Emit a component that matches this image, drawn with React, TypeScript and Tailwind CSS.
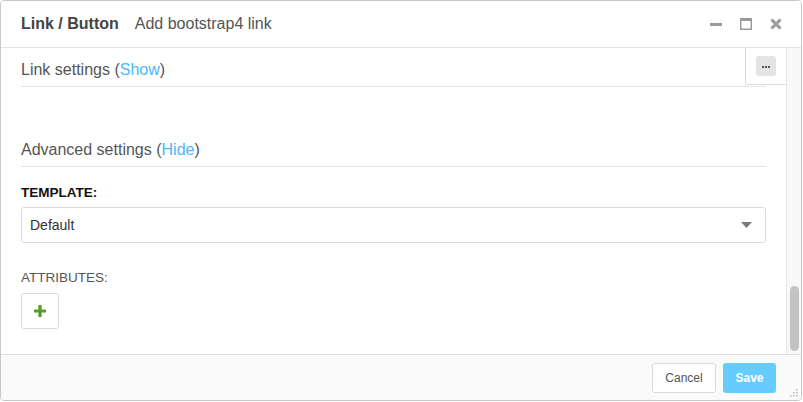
export default function App() {
  return (
    <div className="w-[803px] h-[402px] bg-white font-['Liberation_Sans',Arial,sans-serif]">
      <div className="w-[802px] h-[401px] border border-[#c8c8c8] rounded-[4px] flex flex-col overflow-hidden">
        {/* Header */}
        <div className="h-[47px] shrink-0 flex items-center pl-[20px] pr-[19px] bg-white border-b border-[#e3e3e3]">
          <span className="text-[16px] font-bold text-[#444]">Link / Button</span>
          <span className="ml-[16px] text-[16px] text-[#555]">Add bootstrap4 link</span>
          <div className="ml-auto flex items-center gap-[18px] text-[#9a9a9a]">
            <svg width="12" height="12" viewBox="0 0 12 12">
              <rect x="0" y="5" width="12" height="3" fill="currentColor" />
            </svg>
            <svg width="12" height="12" viewBox="0 0 12 12">
              <rect x="0.75" y="0.75" width="10.5" height="10.5" fill="none" stroke="currentColor" strokeWidth="1.5" />
              <rect x="0" y="0" width="12" height="3" fill="currentColor" />
            </svg>
            <svg width="12" height="12" viewBox="0 0 12 12">
              <path d="M1.5 1.5 L10.5 10.5 M10.5 1.5 L1.5 10.5" stroke="currentColor" strokeWidth="3" />
            </svg>
          </div>
        </div>

        {/* Body */}
        <div className="relative flex-1 flex min-h-0 bg-white">
          <div className="flex-1 px-[20px] overflow-hidden">
            <div className="pt-[11px] pb-[5px] border-b border-[#e3e3e3] text-[16px] leading-[22px] text-[#555]">
              Link settings (<span className="text-[#4cb8f5]">Show</span>)
            </div>
            <div className="mt-[52px] pb-[5px] border-b border-[#e3e3e3] text-[16px] leading-[22px] text-[#555]">
              Advanced settings (<span className="text-[#4cb8f5]">Hide</span>)
            </div>
            <div className="mt-[17px] text-[13.5px] leading-[18px] font-bold text-[#111]">TEMPLATE:</div>
            <div className="mt-[5px] h-[36px] border border-[#dcdcdc] rounded-[3px] bg-white flex items-center pl-[8px] pr-[13px]">
              <span className="text-[14px] text-[#333]">Default</span>
              <svg className="ml-auto" width="11" height="6" viewBox="0 0 11 6">
                <path d="M0 0 H11 L5.5 6 Z" fill="#7a7a7a" />
              </svg>
            </div>
            <div className="mt-[26px] text-[13.5px] leading-[18px] text-[#555]">ATTRIBUTES:</div>
            <div className="mt-[6px] w-[38px] h-[36px] border border-[#dcdcdc] rounded-[3px] bg-white flex items-center justify-center">
              <svg width="12" height="12" viewBox="0 0 12 12">
                <path d="M6 0 V12 M0 6 H12" stroke="#5a9b2c" strokeWidth="3.2" />
              </svg>
            </div>
          </div>

          {/* floating options box */}
          <div className="absolute right-[15px] top-0 w-[41px] h-[37px] bg-white border-l border-b border-[#dcdcdc] rounded-bl-[2px] flex items-center justify-center">
            <div className="w-[20px] h-[20px] rounded-[3px] bg-[#e4e4e4] flex items-center justify-center gap-[1px] pt-[1px]">
              <span className="w-[2px] h-[2px] bg-[#555]" />
              <span className="w-[2px] h-[2px] bg-[#555]" />
              <span className="w-[2px] h-[2px] bg-[#555]" />
            </div>
          </div>

          {/* scrollbar */}
          <div className="w-[15px] shrink-0 border-l border-[#e6e6e6] bg-[#f8f8f8] flex flex-col justify-end items-center pb-[3px]">
            <div className="w-[9px] h-[65px] rounded-full bg-[#c3c3c3]" />
          </div>
        </div>

        {/* Footer */}
        <div className="h-[46px] shrink-0 relative border-t border-[#e0e0e0] bg-[#fafafa] flex items-center justify-end gap-[7px] pr-[25px]">
          <button className="h-[30px] w-[64px] border border-[#d9d9d9] rounded-[3px] bg-white text-[12px] text-[#555]">
            Cancel
          </button>
          <button className="h-[30px] w-[53px] rounded-[3px] bg-[#66ccff] text-[12px] font-bold text-white">
            Save
          </button>
          <svg className="absolute right-[2px] bottom-[2px]" width="10" height="10" viewBox="0 0 10 10">
            <g fill="#b5b5b5">
              <rect x="7" y="1" width="1.5" height="1.5" />
              <rect x="4" y="4" width="1.5" height="1.5" />
              <rect x="7" y="4" width="1.5" height="1.5" />
              <rect x="1" y="7" width="1.5" height="1.5" />
              <rect x="4" y="7" width="1.5" height="1.5" />
              <rect x="7" y="7" width="1.5" height="1.5" />
            </g>
          </svg>
        </div>
      </div>
    </div>
  );
}
